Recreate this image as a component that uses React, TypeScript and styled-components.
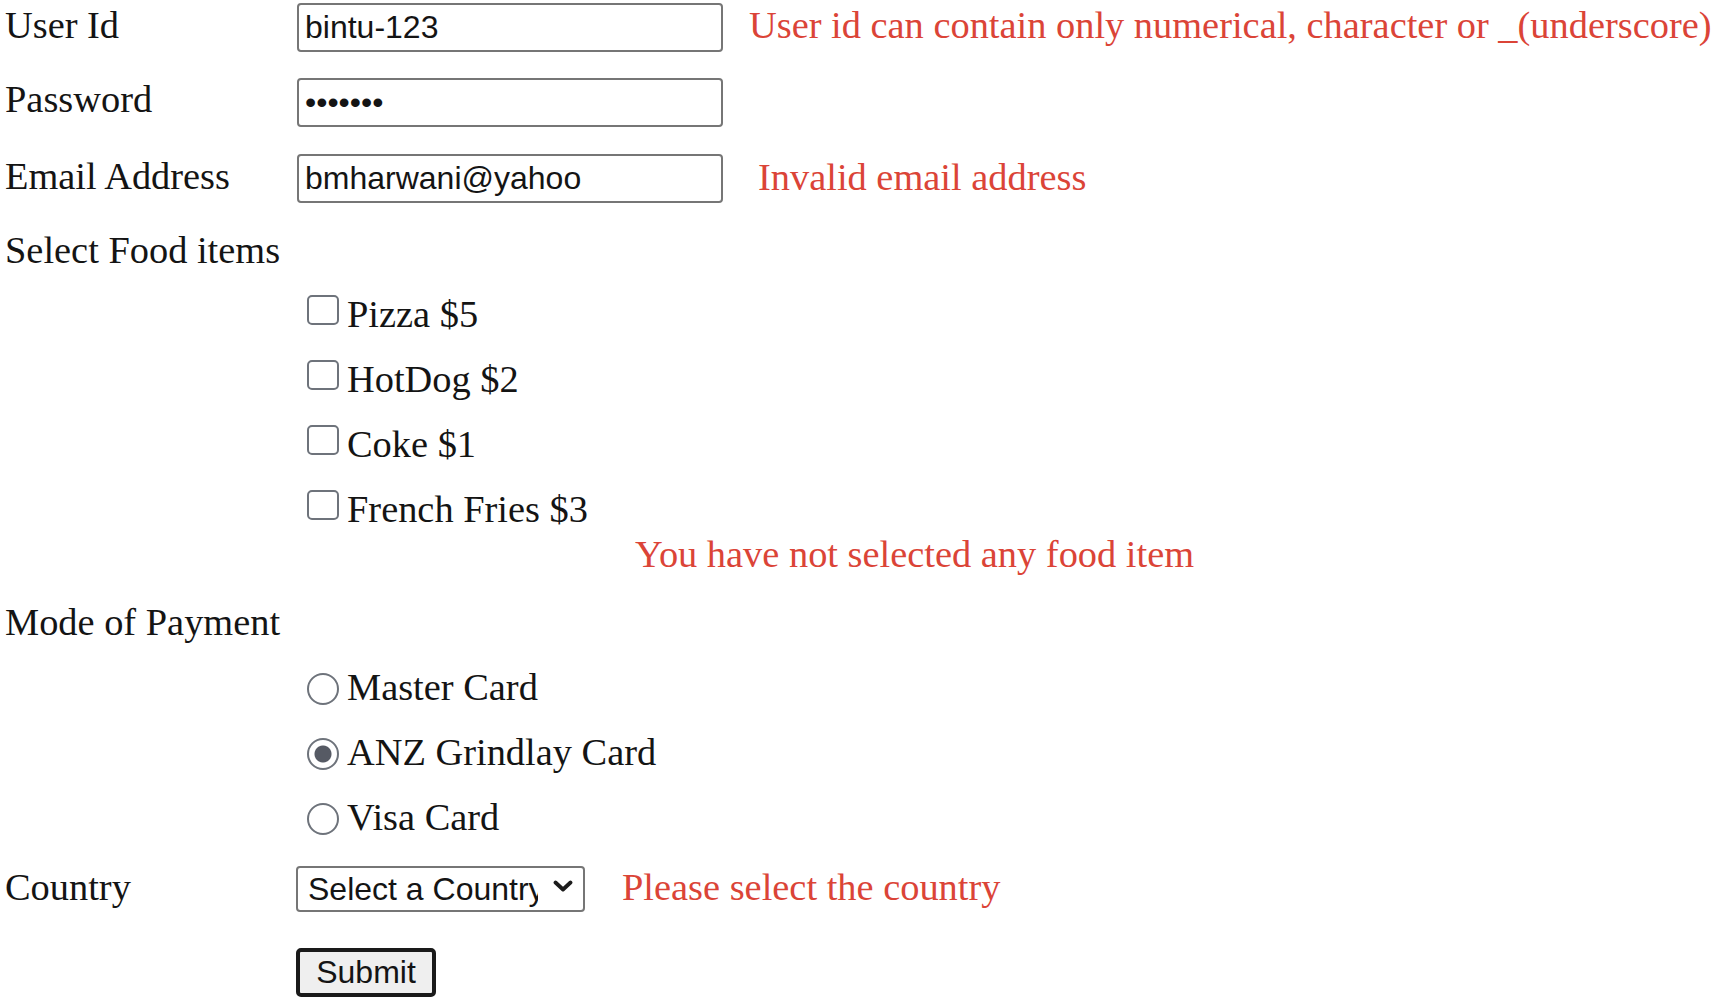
import React from "react";
import styled, { createGlobalStyle } from "styled-components";

const GlobalStyle = createGlobalStyle`
  html, body { margin: 0; padding: 0; background: #fff; }
  body { font-family: "Liberation Serif", "Times New Roman", serif; color: #111; }
`;

const Form = styled.form`
  display: flex;
  flex-direction: column;
  padding-left: 5px;
  font-family: "Liberation Serif", "Times New Roman", serif;
  font-size: 38.4px;
  line-height: 48px;
  color: #141414;
`;

const FieldRow = styled.div<{ $gap: number }>`
  display: flex;
  align-items: flex-start;
  margin-top: ${(p) => p.$gap}px;
`;

const FieldLabel = styled.label<{ $offset?: number }>`
  flex: 0 0 292px;
  width: 292px;
  margin-top: ${(p) => p.$offset ?? 0}px;
  white-space: nowrap;
`;

const TextInput = styled.input`
  box-sizing: border-box;
  width: 426px;
  height: 49px;
  margin: 0;
  padding: 0 6px;
  border: 2px solid #767676;
  border-radius: 4px;
  font-family: "Liberation Sans", Arial, sans-serif;
  font-size: 32px;
  color: #141414;
  background: #fff;
  outline: none;
`;

const ErrorText = styled.span<{ $indent: number; $offset?: number }>`
  color: #db4437;
  margin-left: ${(p) => p.$indent}px;
  margin-top: ${(p) => p.$offset ?? 0}px;
  white-space: nowrap;
`;

const SectionLabel = styled.div<{ $gap: number }>`
  margin-top: ${(p) => p.$gap}px;
  white-space: nowrap;
`;

const OptionRow = styled.label<{ $gap: number }>`
  display: flex;
  align-items: flex-start;
  padding-left: 292px;
  margin-top: ${(p) => p.$gap}px;
  white-space: nowrap;
`;

const CheckBox = styled.input`
  appearance: none;
  box-sizing: border-box;
  flex: 0 0 auto;
  width: 32px;
  height: 30px;
  margin: 5px 8px 0 10px;
  border: 2px solid #6e737b;
  border-radius: 5px;
  background: #fff;
`;

const Radio = styled.input`
  appearance: none;
  box-sizing: border-box;
  flex: 0 0 auto;
  width: 32px;
  height: 32px;
  margin: 10px 8px 0 10px;
  border: 2px solid #6e737b;
  border-radius: 50%;
  background: #fff;
  &:checked {
    background: radial-gradient(circle, #565a64 0 8px, #fff 9px);
  }
`;

const BlockError = styled.div<{ $gap: number; $indent: number }>`
  color: #db4437;
  margin-top: ${(p) => p.$gap}px;
  margin-left: ${(p) => p.$indent}px;
  white-space: nowrap;
`;

const SelectWrap = styled.div`
  position: relative;
  flex: 0 0 auto;
  margin: 5px 0 0 -1px;
`;

const CountrySelect = styled.select`
  appearance: none;
  box-sizing: border-box;
  width: 289px;
  height: 46px;
  margin: 0;
  padding: 0 45px 0 10px;
  border: 2px solid #767676;
  border-radius: 4px;
  background: #fff;
  font-family: "Liberation Sans", Arial, sans-serif;
  font-size: 32px;
  color: #141414;
  outline: none;
`;

const Chevron = styled.svg`
  position: absolute;
  right: 12px;
  top: 17px;
  width: 20px;
  height: 12px;
  pointer-events: none;
`;

const SubmitRow = styled.div`
  display: flex;
  padding-left: 291px;
  margin-top: 36px;
`;

const SubmitButton = styled.button`
  box-sizing: border-box;
  width: 140px;
  height: 49px;
  margin: 0;
  padding: 0;
  border: 4px solid #1a1a1a;
  border-radius: 5px;
  background: #efefef;
  font-family: "Liberation Sans", Arial, sans-serif;
  font-size: 32px;
  color: #141414;
`;

const foods = ["Pizza $5", "HotDog $2", "Coke $1", "French Fries $3"];
const payments = ["Master Card", "ANZ Grindlay Card", "Visa Card"];

export default function App() {
  return (
    <>
      <GlobalStyle />
      <Form onSubmit={(e) => e.preventDefault()}>
        <FieldRow $gap={3}>
          <FieldLabel $offset={-2}>User Id</FieldLabel>
          <TextInput type="text" defaultValue="bintu-123" />
          <ErrorText $indent={26} $offset={-2}>
            User id can contain only numerical, character or _(underscore)
          </ErrorText>
        </FieldRow>
        <FieldRow $gap={26}>
          <FieldLabel $offset={-3}>Password</FieldLabel>
          <TextInput type="password" defaultValue="1234567" />
        </FieldRow>
        <FieldRow $gap={27}>
          <FieldLabel $offset={-2}>Email Address</FieldLabel>
          <TextInput type="text" defaultValue="bmharwani@yahoo" />
          <ErrorText $indent={35} $offset={-1}>
            Invalid email address
          </ErrorText>
        </FieldRow>

        <SectionLabel $gap={23}>Select Food items</SectionLabel>
        {foods.map((f, i) => (
          <OptionRow key={f} $gap={i === 0 ? 16 : 17}>
            <CheckBox type="checkbox" name="food" />
            {f}
          </OptionRow>
        ))}
        <BlockError $gap={-3} $indent={630}>
          You have not selected any food item
        </BlockError>

        <SectionLabel $gap={20}>Mode of Payment</SectionLabel>
        {payments.map((p, i) => (
          <OptionRow key={p} $gap={17}>
            <Radio type="radio" name="payment" defaultChecked={i === 1} />
            {p}
          </OptionRow>
        ))}

        <FieldRow $gap={17}>
          <FieldLabel $offset={5}>Country</FieldLabel>
          <SelectWrap>
            <CountrySelect defaultValue="">
              <option value="">Select a Country</option>
              <option value="in">India</option>
              <option value="au">Australia</option>
              <option value="us">USA</option>
            </CountrySelect>
            <Chevron viewBox="0 0 20 12">
              <path d="M2.5 2.5 L10 9.5 L17.5 2.5" fill="none" stroke="#1c1c1c" strokeWidth="3.8" strokeLinecap="round" strokeLinejoin="round" />
            </Chevron>
          </SelectWrap>
          <ErrorText $indent={37} $offset={5}>
            Please select the country
          </ErrorText>
        </FieldRow>

        <SubmitRow>
          <SubmitButton type="submit">Submit</SubmitButton>
        </SubmitRow>
      </Form>
    </>
  );
}
